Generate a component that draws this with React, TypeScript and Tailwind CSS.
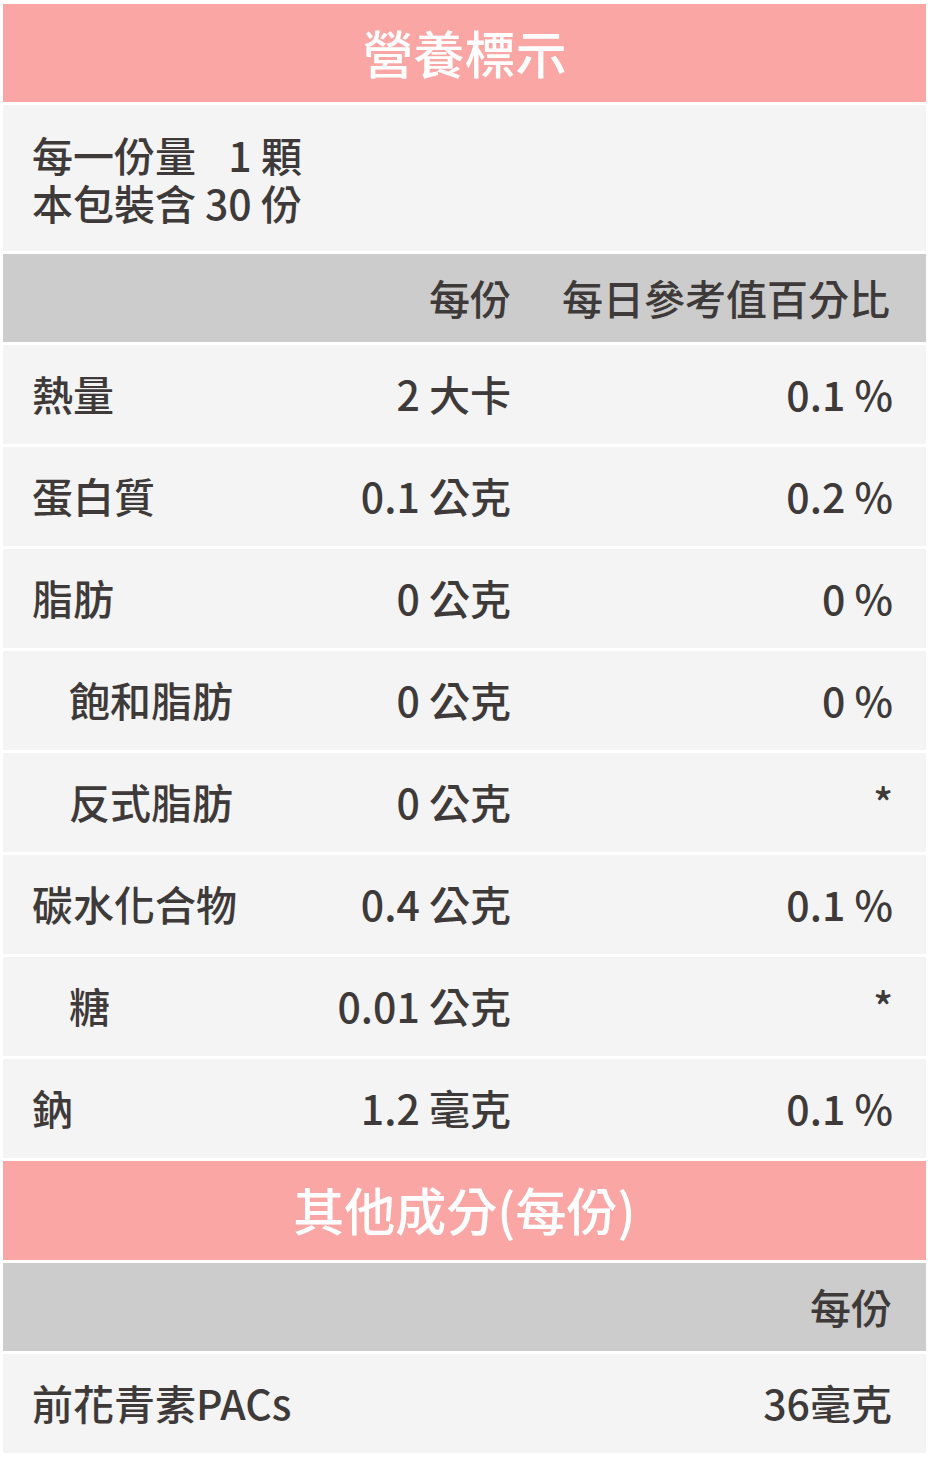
import React from "react";

const font = { fontFamily: '"Noto Sans CJK TC", "Noto Sans", sans-serif' };

type Row = { label: string; value: string; pct: string; indent?: boolean };

const rows: Row[] = [
  { label: "熱量", value: "2 大卡", pct: "0.1 %" },
  { label: "蛋白質", value: "0.1 公克", pct: "0.2 %" },
  { label: "脂肪", value: "0 公克", pct: "0 %" },
  { label: "飽和脂肪", value: "0 公克", pct: "0 %", indent: true },
  { label: "反式脂肪", value: "0 公克", pct: "*", indent: true },
  { label: "碳水化合物", value: "0.4 公克", pct: "0.1 %" },
  { label: "糖", value: "0.01 公克", pct: "*", indent: true },
  { label: "鈉", value: "1.2 毫克", pct: "0.1 %" },
];

export default function App() {
  return (
    <div className="w-[930px] h-[1464px] bg-white pt-[4px] pl-[3px] pr-[4px]" style={font}>
      <div className="flex flex-col gap-[3px] text-[#3e3a39] text-[41px] leading-[48px] font-medium">
        <div className="h-[98px] bg-[#faa6a5] flex items-center justify-center text-white text-[51px] leading-none pb-[2px]">
          營養標示
        </div>
        <div className="h-[146px] bg-[#f4f4f4] flex items-center pl-[29px] pb-[1px]">
          <div className="grid grid-cols-[auto_auto] gap-x-[9px]">
            <span>每一份量</span>
            <span className="text-right">1 顆</span>
            <span>本包裝含</span>
            <span className="text-right">30 份</span>
          </div>
        </div>
        <div className="h-[88px] bg-[#cccccc] grid grid-cols-[1fr_382px] items-center pl-[29px] pr-[36px] pb-[2px]">
          <span className="text-right -mr-[3px]">每份</span>
          <span className="text-right">每日參考值百分比</span>
        </div>
        {rows.map((r) => (
          <div
            key={r.label}
            className="h-[99px] bg-[#f4f4f4] grid grid-cols-[1fr_auto_382px] items-center pl-[29px] pr-[33px] pb-[3px]"
          >
            <span className={r.indent ? "pl-[37px]" : ""}>{r.label}</span>
            <span className="text-right">{r.value}</span>
            <span className="text-right">{r.pct}</span>
          </div>
        ))}
        <div className="h-[99px] bg-[#faa6a5] flex items-center justify-center text-white text-[51px] leading-none pb-[2px]">
          其他成分(每份)
        </div>
        <div className="h-[88px] bg-[#cccccc] flex items-center justify-end pl-[29px] pr-[34px] pb-[2px]">
          <span>每份</span>
        </div>
        <div className="h-[99px] bg-[#f4f4f4] flex items-center justify-between pl-[29px] pr-[34px] pb-[3px]">
          <span>前花青素PACs</span>
          <span>36毫克</span>
        </div>
      </div>
    </div>
  );
}
